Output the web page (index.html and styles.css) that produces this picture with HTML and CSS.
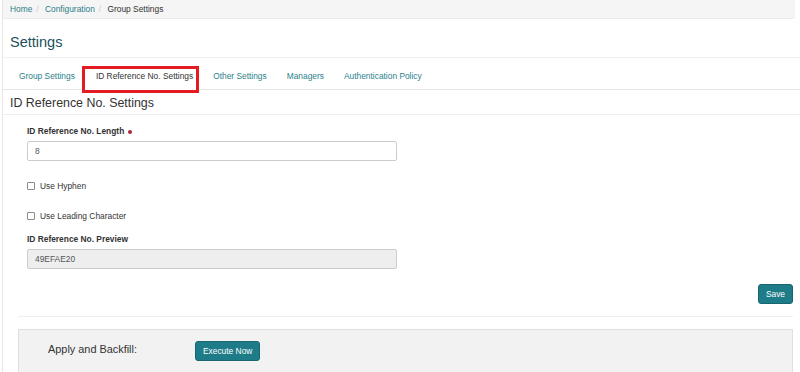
FILE: index.html
```html
<!DOCTYPE html>
<html lang="en">
<head>
    <meta charset="UTF-8">
    <title>Settings</title>
    <link rel="stylesheet" href="styles.css">
</head>
<body>
    <div class="page">
        <div class="breadcrumb">
            <a href="#">Home</a><span class="sep">/</span>
            <a href="#">Configuration</a><span class="sep">/</span>
            <span class="current">Group Settings</span>
        </div>

        <h1 class="page-title">Settings</h1>

        <div class="tabs">
            <a href="#" class="tab">Group Settings</a>
            <a href="#" class="tab active">ID Reference No. Settings</a>
            <a href="#" class="tab">Other Settings</a>
            <a href="#" class="tab">Managers</a>
            <a href="#" class="tab">Authentication Policy</a>
        </div>

        <h2 class="section-title">ID Reference No. Settings</h2>

        <div class="form">
            <div class="field">
                <label class="field-label">ID Reference No. Length <span class="required"></span></label>
                <input type="text" class="text-input" value="8">
            </div>
            <label class="check"><input type="checkbox"> Use Hyphen</label>
            <label class="check"><input type="checkbox"> Use Leading Character</label>
            <div class="field preview">
                <label class="field-label">ID Reference No. Preview</label>
                <input type="text" class="text-input readonly" value="49EFAE20" readonly>
            </div>
        </div>

        <div class="actions">
            <button class="btn">Save</button>
        </div>

        <div class="backfill">
            <span class="backfill-label">Apply and Backfill:</span>
            <button class="btn">Execute Now</button>
        </div>
    </div>
</body>
</html>
```

FILE: styles.css
```css
body {
    margin: 0;
    font-family: "Liberation Sans", Arial, sans-serif;
    font-size: 8.4px;
    color: #333;
    background: #fff;
    overflow: hidden;
}
.page {
    border-left: 1px solid #e6e6e6;
    margin-left: 2px;
    height: 372px;
}
.breadcrumb {
    background: #f5f5f5;
    border-bottom: 1px solid #ebebeb;
    height: 18px;
    line-height: 18px;
    padding: 0 7px;
    margin-right: 5px;
    border-radius: 0 0 3px 0;
}
.breadcrumb a {
    color: #2a7f8a;
    text-decoration: none;
}
.breadcrumb .sep {
    color: #ccc;
    padding: 0 4px;
}
.breadcrumb .current {
    color: #333;
}
.page-title {
    font-size: 14.5px;
    font-weight: normal;
    color: #1d4f5b;
    margin: 0;
    padding: 14px 7px 0;
    line-height: 18px;
    height: 24px;
    border-bottom: 1px solid #f0f0f0;
}
.tabs {
    display: flex;
    align-items: flex-start;
    height: 31px;
    padding-left: 6px;
    border-bottom: 1px solid #e8e8e8;
}
.tab {
    color: #2a7f8a;
    text-decoration: none;
    padding: 0 10px;
    margin-top: 11px;
    line-height: 14px;
}
/* red highlight around the current tab */
.tab.active {
    color: #333;
    border: 3px solid #e31c23;
    padding: 0 3px 7px 11px;
    margin: 8px 4px 0 -3px;
    position: relative;
    background: #fff;
}
.section-title {
    font-size: 12.4px;
    font-weight: normal;
    color: #333;
    margin: 0;
    padding: 5px 7px 0;
    line-height: 16px;
    height: 19px;
    border-bottom: 1px solid #eee;
}
.form {
    padding: 11px 0 0 24px;
    width: 370px;
}
.field-label {
    display: block;
    font-weight: bold;
    line-height: 11px;
    margin-bottom: 4px;
}
.required {
    display: inline-block;
    width: 4px;
    height: 4px;
    border-radius: 50%;
    background: #b0243a;
    vertical-align: middle;
    margin-left: 1px;
}
.text-input {
    display: block;
    box-sizing: border-box;
    width: 370px;
    height: 20px;
    border: 1px solid #ccc;
    border-radius: 2px;
    padding: 0 7px;
    font-family: inherit;
    font-size: 8.4px;
    color: #555;
}
.text-input.readonly {
    background: #eee;
}
.check {
    display: flex;
    align-items: center;
    height: 10px;
    margin-top: 20px;
}
.check input {
    appearance: none;
    box-sizing: border-box;
    margin: 0 5px 0 0;
    width: 8px;
    height: 8px;
    border: 1px solid #8a8a8a;
    border-radius: 1px;
    background: #fff;
}
.preview {
    margin-top: 13px;
}
.actions {
    display: flex;
    justify-content: flex-end;
    margin: 15px 7px 0 15px;
    padding-bottom: 12px;
    border-bottom: 1px solid #eee;
}
.btn {
    background: #1e7b88;
    color: #fff;
    border: 1px solid #176670;
    border-radius: 3px;
    font-family: inherit;
    font-size: 8.4px;
    height: 20px;
    padding: 0 7px;
    cursor: pointer;
}
.backfill {
    display: flex;
    align-items: center;
    margin: 12px 7px 0 15px;
    padding: 11px 0 20px 29px;
    background: #f2f2f2;
    border: 1px solid #e0e0e0;
    border-bottom: none;
}
.backfill-label {
    font-size: 10.9px;
    width: 147px;
    margin-top: -5px;
}
```
